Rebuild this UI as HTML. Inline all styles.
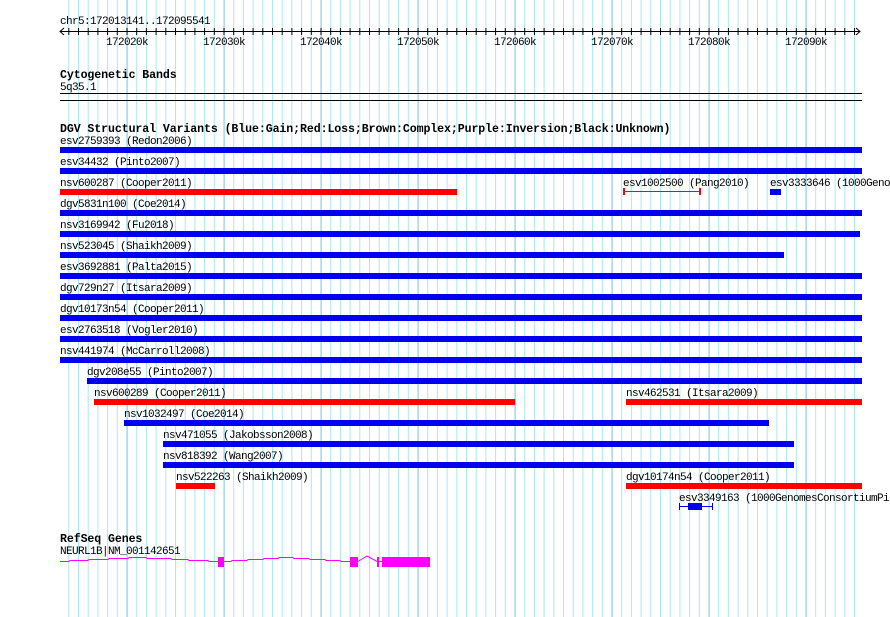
<!DOCTYPE html>
<html><head><meta charset="utf-8"><style>
html,body{margin:0;padding:0;background:#fff;width:890px;height:617px;overflow:hidden}
svg text{font-family:"Liberation Mono",monospace;font-size:11px;letter-spacing:-0.6px;fill:#000}
svg text.h{font-weight:bold;font-size:11.6px;letter-spacing:-0.1px}
</style></head><body>
<svg width="890" height="617" viewBox="0 0 890 617" xmlns="http://www.w3.org/2000/svg">
<defs>
<pattern id="mn" x="68.3" y="0" width="9.7" height="617" patternUnits="userSpaceOnUse"><rect x="0" y="0" width="1" height="617" fill="#a8eaf0"/></pattern>
<pattern id="mj" x="126.6" y="0" width="97" height="617" patternUnits="userSpaceOnUse"><rect x="0" y="0" width="1" height="617" fill="#80c4ea"/></pattern>
<pattern id="tk" x="68.3" y="0" width="9.7" height="617" patternUnits="userSpaceOnUse"><rect x="0" y="28" width="1" height="7" fill="#000"/></pattern>
</defs>
<rect x="68" y="0" width="790" height="617" fill="url(#mn)"/>
<rect x="126" y="0" width="732" height="617" fill="url(#mj)"/>
<text x="60" y="24">chr5:172013141..172095541</text>
<rect x="60" y="31" width="800" height="1" fill="#000"/>
<rect x="68" y="0" width="790" height="617" fill="url(#tk)"/>
<polyline points="64,28 60,31.5 64,35" fill="none" stroke="#000"/>
<polyline points="856,28 860,31.5 856,35" fill="none" stroke="#000"/>
<g text-anchor="middle">
<text x="127" y="45">172020k</text><text x="224" y="45">172030k</text><text x="321" y="45">172040k</text><text x="418" y="45">172050k</text><text x="515" y="45">172060k</text><text x="612" y="45">172070k</text><text x="709" y="45">172080k</text><text x="806" y="45">172090k</text>
</g>
<text class="h" x="60" y="78">Cytogenetic Bands</text>
<text x="60" y="90">5q35.1</text>
<rect x="60" y="93" width="802" height="1" fill="#000"/>
<rect x="60" y="100" width="802" height="1" fill="#000"/>
<text class="h" x="60" y="132">DGV Structural Variants (Blue:Gain;Red:Loss;Brown:Complex;Purple:Inversion;Black:Unknown)</text>
<g fill="#0000ee">
<rect x="60" y="147" width="802" height="6"/>
<rect x="60" y="168" width="802" height="6"/>
<rect x="60" y="210" width="802" height="6"/>
<rect x="60" y="231" width="800" height="6"/>
<rect x="60" y="252" width="724" height="6"/>
<rect x="60" y="273" width="802" height="6"/>
<rect x="60" y="294" width="802" height="6"/>
<rect x="60" y="315" width="802" height="6"/>
<rect x="60" y="336" width="802" height="6"/>
<rect x="60" y="357" width="802" height="6"/>
<rect x="87" y="378" width="775" height="6"/>
<rect x="124" y="420" width="645" height="6"/>
<rect x="163" y="441" width="631" height="6"/>
<rect x="163" y="462" width="631" height="6"/>
<rect x="770" y="189" width="11" height="6"/>
<rect x="679" y="506" width="34" height="1"/>
<rect x="679" y="503" width="1" height="7"/>
<rect x="712" y="503" width="1" height="7"/>
<rect x="688" y="503" width="14" height="7"/>
</g>
<g fill="#ff0000">
<rect x="60" y="189" width="397" height="6"/>
<rect x="94" y="399" width="421" height="6"/>
<rect x="626" y="399" width="236" height="6"/>
<rect x="176" y="483" width="39" height="6"/>
<rect x="626" y="483" width="236" height="6"/>
<rect x="623" y="191" width="77" height="1"/>
<rect x="623" y="188" width="2" height="7"/>
<rect x="699" y="188" width="2" height="7"/>
</g>
<text x="60" y="144">esv2759393 (Redon2006)</text>
<text x="60" y="165">esv34432 (Pinto2007)</text>
<text x="60" y="186">nsv600287 (Cooper2011)</text>
<text x="623" y="186">esv1002500 (Pang2010)</text>
<text x="770" y="186">esv3333646 (1000Geno</text>
<text x="60" y="207">dgv5831n100 (Coe2014)</text>
<text x="60" y="228">nsv3169942 (Fu2018)</text>
<text x="60" y="249">nsv523045 (Shaikh2009)</text>
<text x="60" y="270">esv3692881 (Palta2015)</text>
<text x="60" y="291">dgv729n27 (Itsara2009)</text>
<text x="60" y="312">dgv10173n54 (Cooper2011)</text>
<text x="60" y="333">esv2763518 (Vogler2010)</text>
<text x="60" y="354">nsv441974 (McCarroll2008)</text>
<text x="87" y="375">dgv208e55 (Pinto2007)</text>
<text x="94" y="396">nsv600289 (Cooper2011)</text>
<text x="626" y="396">nsv462531 (Itsara2009)</text>
<text x="124" y="417">nsv1032497 (Coe2014)</text>
<text x="163" y="438">nsv471055 (Jakobsson2008)</text>
<text x="163" y="459">nsv818392 (Wang2007)</text>
<text x="176" y="480">nsv522263 (Shaikh2009)</text>
<text x="626" y="480">dgv10174n54 (Cooper2011)</text>
<text x="679" y="501">esv3349163 (1000GenomesConsortiumPi</text>
<text class="h" x="60" y="542">RefSeq Genes</text>
<text x="60" y="554">NEURL1B|NM_001142651</text>
<g stroke="#ff00ff" fill="none">
<polyline points="60,561.5 69,561.5 70,560.5 88,560.5 89,559.5 108,559.5 109,558.5 128,558.5 129,557.5 146,557.5 147,558.5 171,558.5 172,559.5 188,559.5 189,560.5 208,560.5 209,561.5 218,561.5"/>
<polyline points="224,561.5 231,561.5 232,560.5 247,560.5 248,559.5 263,559.5 264,558.5 278,558.5 279,557.5 293,557.5 294,558.5 309,558.5 310,559.5 325,559.5 326,560.5 340,560.5 341,561.5 350,561.5"/>
<polyline points="358,561.5 367,556 377,561.5"/>
<line x1="379" y1="561.5" x2="382" y2="561.5"/>
</g>
<g fill="#ff00ff">
<rect x="218" y="557" width="6" height="10"/>
<rect x="350" y="557" width="8" height="10"/>
<rect x="377" y="557" width="2" height="10"/>
<rect x="382" y="557" width="48" height="10"/>
</g>
</svg>
</body></html>
